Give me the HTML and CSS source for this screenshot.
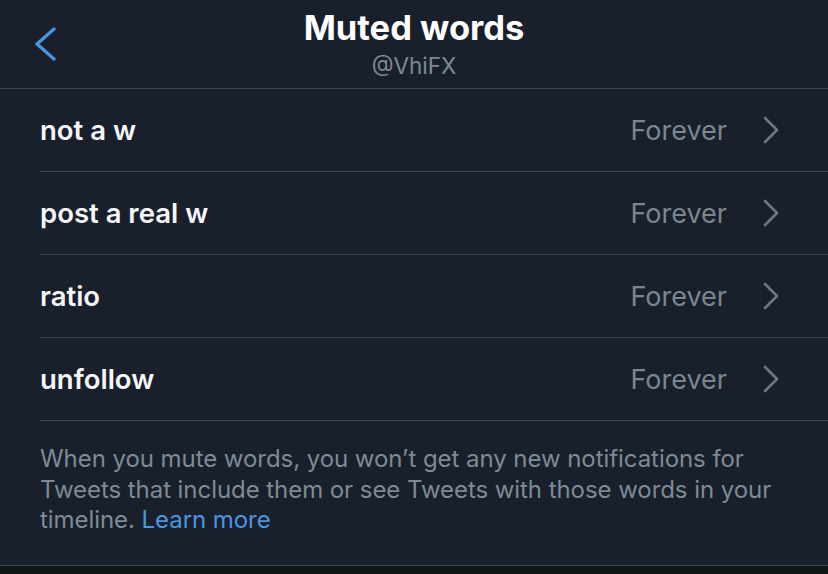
FILE: index.html
```html
<!DOCTYPE html>
<html lang="en">
<head>
<meta charset="utf-8">
<title>Muted words</title>
<link rel="stylesheet" href="styles.css">
</head>
<body>
<div class="screen">
  <header class="topbar">
    <div class="back">
      <svg width="24" height="36" viewBox="0 0 24 36" aria-hidden="true">
        <polyline points="19,3 2,18 19,33" fill="none" stroke="#4a93dd" stroke-width="3.4" stroke-linecap="round" stroke-linejoin="round"/>
      </svg>
    </div>
    <div class="heading">
      <div class="title">Muted words</div>
      <div class="handle">@VhiFX</div>
    </div>
    <div class="spacer"></div>
  </header>

  <ul class="list">
    <li class="row"><span class="word">not a w</span><span class="dur">Forever</span><svg class="chev" width="16" height="28" viewBox="0 0 16 28"><polyline points="2,2 14,14 2,26" fill="none" stroke="#6c7885" stroke-width="2.6" stroke-linecap="round" stroke-linejoin="round"/></svg></li>
    <li class="row"><span class="word">post a real w</span><span class="dur">Forever</span><svg class="chev" width="16" height="28" viewBox="0 0 16 28"><polyline points="2,2 14,14 2,26" fill="none" stroke="#6c7885" stroke-width="2.6" stroke-linecap="round" stroke-linejoin="round"/></svg></li>
    <li class="row"><span class="word">ratio</span><span class="dur">Forever</span><svg class="chev" width="16" height="28" viewBox="0 0 16 28"><polyline points="2,2 14,14 2,26" fill="none" stroke="#6c7885" stroke-width="2.6" stroke-linecap="round" stroke-linejoin="round"/></svg></li>
    <li class="row"><span class="word">unfollow</span><span class="dur">Forever</span><svg class="chev" width="16" height="28" viewBox="0 0 16 28"><polyline points="2,2 14,14 2,26" fill="none" stroke="#6c7885" stroke-width="2.6" stroke-linecap="round" stroke-linejoin="round"/></svg></li>
  </ul>

  <p class="note">When you mute words, you won’t get any new notifications for Tweets that include them or see Tweets with those words in your timeline. <a class="link" href="#">Learn more</a></p>
</div>
<div class="bottom"></div>
</body>
</html>
```

FILE: styles.css
```css
* { box-sizing: border-box; }
html, body { margin: 0; padding: 0; }
body {
  background: #111418;
  font-family: "Inter", "Noto Sans", "Liberation Sans", sans-serif;
  width: 828px;
  height: 574px;
  overflow: hidden;
}
.screen {
  background: #19202b;
  border-bottom: 1px solid #3b434d;
  height: 566px;
}
.topbar {
  display: flex;
  height: 89px;
  border-bottom: 1px solid #3f4751;
}
.back {
  width: 80px;
  padding: 26px 0 0 35px;
}
.back svg { display: block; }
.heading {
  flex: 1;
  text-align: center;
  padding-top: 8px;
}
.spacer { width: 80px; }
.title {
  color: #ffffff;
  font-weight: 700;
  font-size: 34.5px;
  line-height: 40px;
}
.handle {
  color: #7e8995;
  font-size: 22.5px;
  line-height: 30px;
  margin-top: 3px;
}
.list {
  list-style: none;
  margin: 0;
  padding: 0 0 0 40px;
}
.row {
  display: flex;
  align-items: center;
  height: 83px;
  border-bottom: 1px solid #3b434d;
  padding-right: 49px;
}
.word {
  flex: 1;
  color: #f4f6f8;
  font-size: 27.5px;
  font-weight: 600;
}
.dur {
  color: #7b8692;
  font-size: 27px;
  margin-right: 36px;
}
.chev { display: block; }
.note {
  margin: 0;
  padding: 23px 40px 0 40px;
  color: #7f8a96;
  font-size: 24px;
  letter-spacing: -0.06px;
  line-height: 30.5px;
}
.link {
  color: #4a96e0;
  text-decoration: none;
}
.bottom { height: 8px; }
```
